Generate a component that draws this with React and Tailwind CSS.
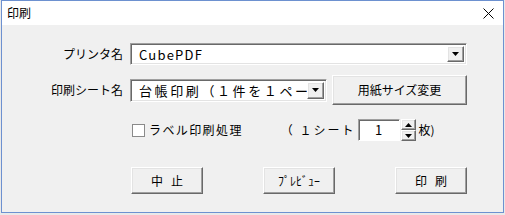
import React from 'react';

const font = { fontFamily: '"Noto Sans CJK JP", "Noto Sans", sans-serif' };

const Raised = ({ className = '', children }) => (
  <div
    className={`flex items-center justify-center bg-[#f0f0f0] border border-t-white border-l-white border-r-[#696969] border-b-[#696969] shadow-[inset_-1px_-1px_0_#a0a0a0,inset_1px_1px_0_#e3e3e3] ${className}`}
  >
    {children}
  </div>
);

const Arrow = ({ up }) => (
  <svg width="7" height="4" viewBox="0 0 7 4">
    {up ? <path d="M3.5 0 L7 4 L0 4 Z" fill="#000" /> : <path d="M0 0 L7 0 L3.5 4 Z" fill="#000" />}
  </svg>
);

const Combo = ({ className = '', text, textClass = '' }) => (
  <div
    className={`flex bg-white border border-t-[#a0a0a0] border-l-[#a0a0a0] border-r-white border-b-white shadow-[inset_1px_1px_0_#696969,inset_-1px_-1px_0_#e3e3e3] p-[2px] ${className}`}
  >
    <div className={`flex-1 min-w-0 flex items-center overflow-x-clip whitespace-nowrap text-black pl-[6px] leading-none ${textClass}`}>
      {text}
    </div>
    <Raised className="w-[17px] h-full shrink-0">
      <Arrow />
    </Raised>
  </div>
);

export default function App() {
  return (
    <div className="w-[505px] h-[215px] bg-[#e9e9e9] text-black" style={font}>
      <div className="ml-px w-[503px] h-[213px] border border-[#6d91d0] bg-[#f0f0f0] flex flex-col">
        <div className="h-[24px] bg-white flex items-center justify-between pl-[5px] pr-[9px]">
          <span className="text-[12px] leading-none">印刷</span>
          <svg width="11" height="11" viewBox="0 0 11 11">
            <path d="M0.5 0.5 L10.5 10.5 M10.5 0.5 L0.5 10.5" stroke="#000" strokeWidth="1" />
          </svg>
        </div>

        <div className="flex flex-col pt-[18px] text-[12px]">
          <div className="flex items-center h-[22px]">
            <div className="w-[121px] text-right">プリンタ名</div>
            <Combo className="ml-[7px] w-[337px] h-[22px]" text="CubePDF" textClass="text-[13px] tracking-[1.2px]" />
          </div>

          <div className="flex items-center h-[30px] mt-[10px]">
            <div className="w-[121px] text-right">印刷シート名</div>
            <Combo
              className="ml-[7px] w-[197px] h-[23px]"
              text="台帳印刷（１件を１ページ）"
              textClass="text-[13px] tracking-[2.6px]"
            />
            <Raised className="ml-[5px] w-[135px] h-[30px]">
              <span className="text-[12px]">用紙サイズ変更</span>
            </Raised>
          </div>

          <div className="flex items-center h-[22px] mt-[14px]">
            <div className="ml-[130px] w-[13px] h-[13px] bg-white border border-[#8a8a8a]" />
            <span className="ml-[4px] tracking-[1.4px]">ラベル印刷処理</span>
            <span className="ml-[38px] tracking-[2px]">（ １シート</span>
            <div className="ml-[2px] w-[42px] h-[22px] bg-white border border-t-[#a0a0a0] border-l-[#a0a0a0] border-r-white border-b-white shadow-[inset_1px_1px_0_#696969] flex items-center justify-center text-[13px]">
              1
            </div>
            <div className="ml-px flex flex-col w-[15px] h-[22px]">
              <Raised className="h-[11px] w-full">
                <Arrow up />
              </Raised>
              <Raised className="h-[11px] w-full">
                <Arrow />
              </Raised>
            </div>
            <span className="ml-[3px]">枚)</span>
          </div>

          <div className="flex items-center h-[27px] mt-[26px]">
            <Raised className="ml-[129px] w-[72px] h-[27px]">
              <span className="tracking-[8px] pl-[8px]">中止</span>
            </Raised>
            <Raised className="ml-[60px] w-[72px] h-[27px]">
              <span>ﾌﾟﾚﾋﾞｭｰ</span>
            </Raised>
            <Raised className="ml-[60px] w-[72px] h-[27px]">
              <span className="tracking-[8px] pl-[8px]">印刷</span>
            </Raised>
          </div>
        </div>
      </div>
    </div>
  );
}
